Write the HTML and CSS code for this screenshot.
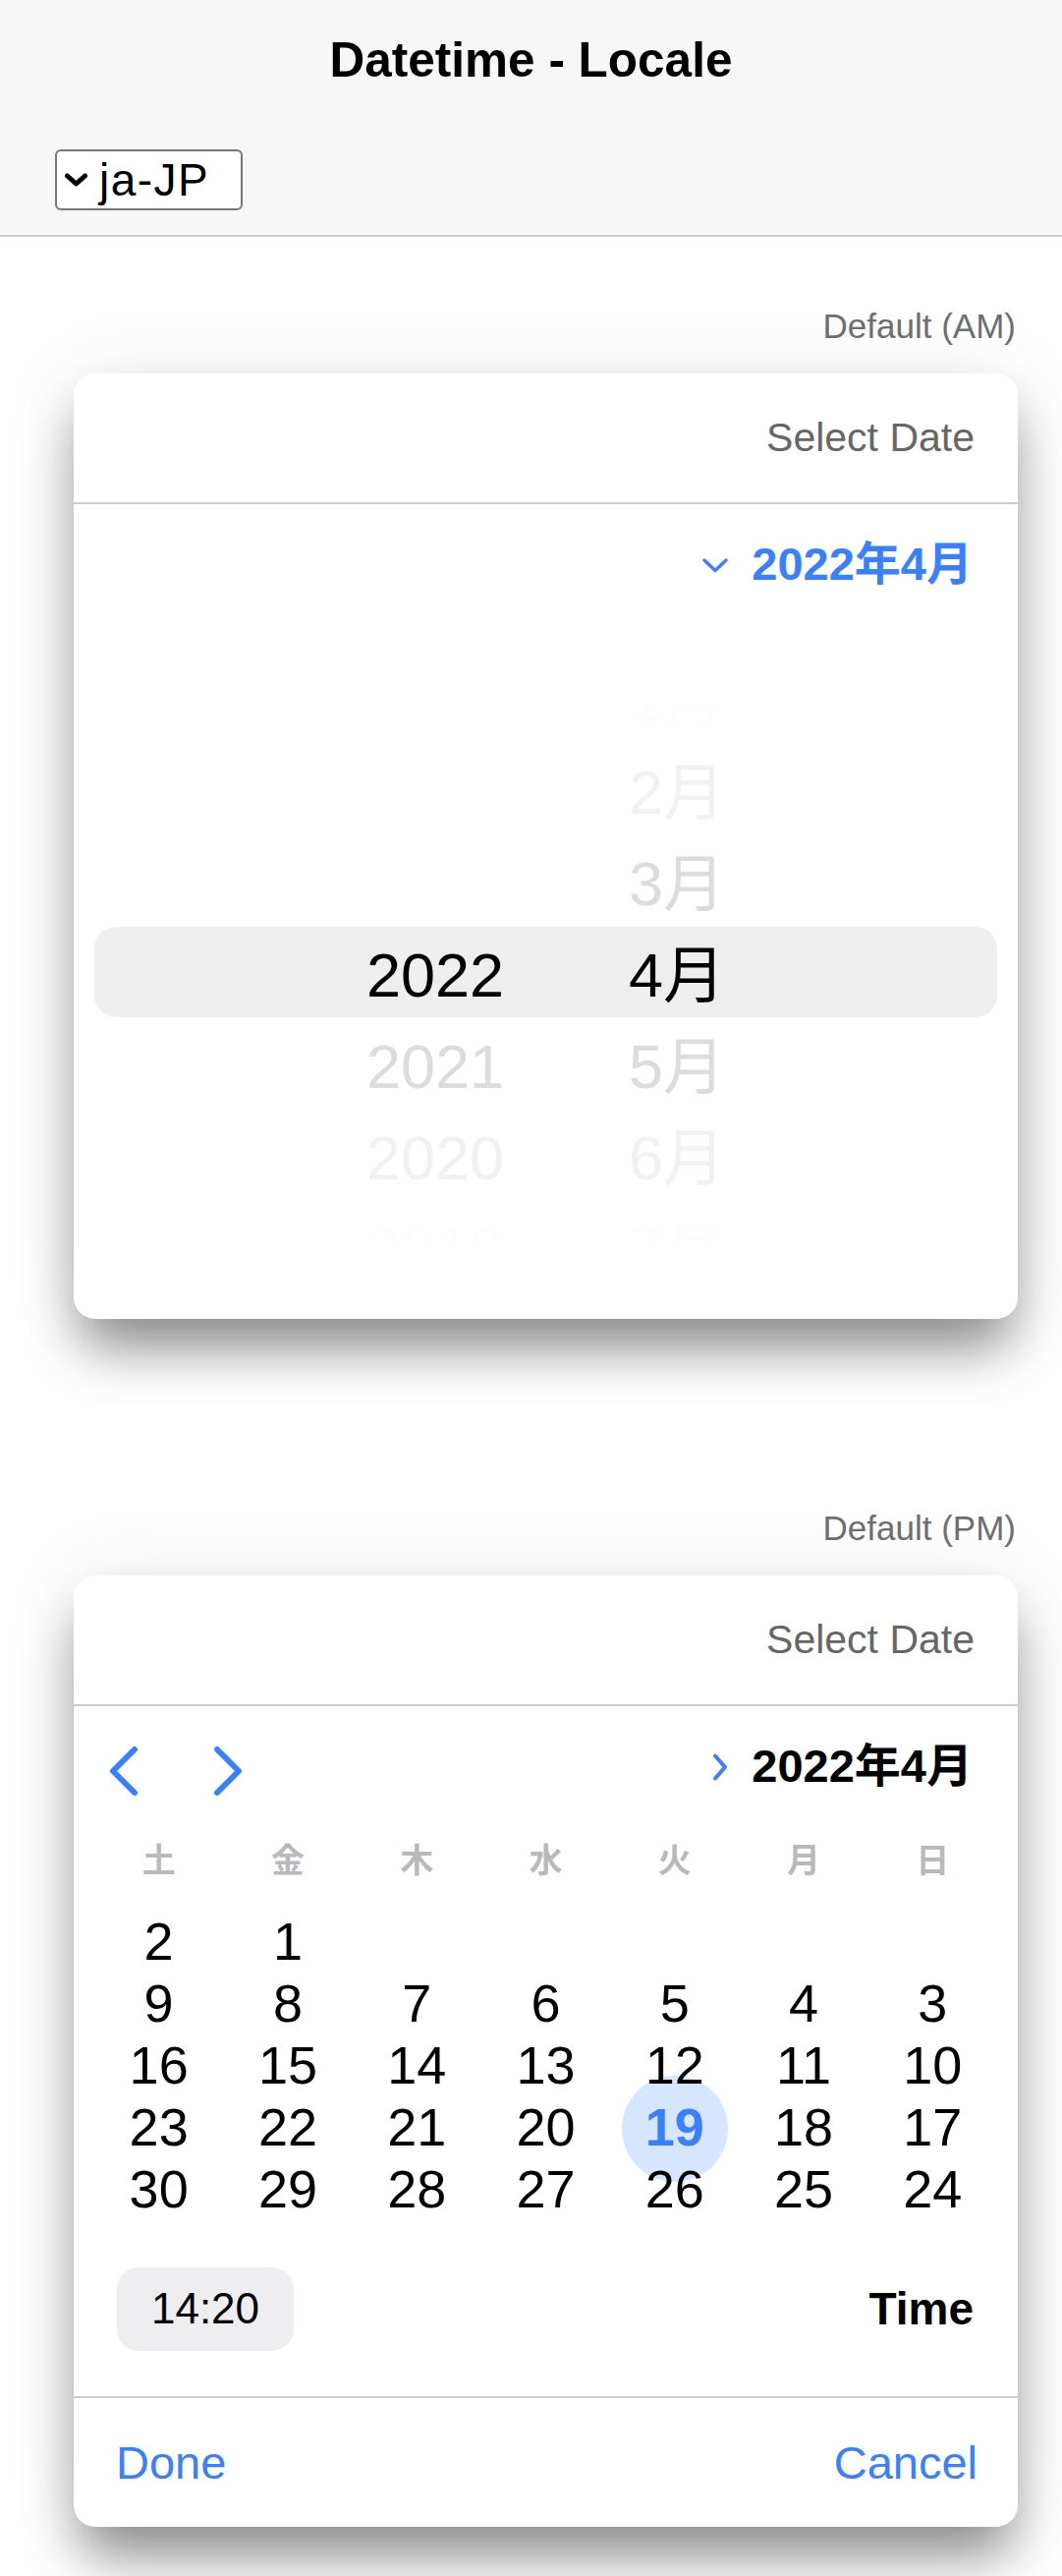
FILE: index.html
```html
<!DOCTYPE html>
<html lang="ja">
<head>
<meta charset="utf-8">
<title>Datetime - Locale</title>
<link rel="stylesheet" href="styles.css">
</head>
<body>
<header class="toolbar">
  <h1 class="title">Datetime - Locale</h1>
  <div class="select-row">
    <div class="select">
      <svg class="select-chev" width="25" height="14" viewBox="0 0 25 14"><path d="M3.5 3 L12.5 11 L21.5 3"/></svg>
      <span class="select-text">ja-JP</span>
    </div>
  </div>
</header>

<main class="content">
  <section class="demo">
    <div class="demo-label">Default (AM)</div>
    <div class="card">
      <div class="card-head">Select Date</div>
      <div class="month-row picker-row">
        <div class="month-toggle">
          <svg class="chev-down" width="28" height="17" viewBox="0 0 28 17"><path d="M3 3 L14 13.5 L25 3"/></svg>
          <span class="month-text blue">2022年4月</span>
        </div>
      </div>
      <div class="wheel">
        <div class="wheel-highlight"></div>
        <div class="wheel-cols">
          <div class="wheel-col">
            <div class="wheel-item d3"></div>
            <div class="wheel-item d2"></div>
            <div class="wheel-item d1"></div>
            <div class="wheel-item d0">2022</div>
            <div class="wheel-item d1">2021</div>
            <div class="wheel-item d2">2020</div>
            <div class="wheel-item d3">2019</div>
          </div>
          <div class="wheel-col">
            <div class="wheel-item d3">1月</div>
            <div class="wheel-item d2">2月</div>
            <div class="wheel-item d1">3月</div>
            <div class="wheel-item d0">4月</div>
            <div class="wheel-item d1">5月</div>
            <div class="wheel-item d2">6月</div>
            <div class="wheel-item d3">7月</div>
          </div>
        </div>
      </div>
    </div>
  </section>

  <section class="demo demo-second">
    <div class="demo-label">Default (PM)</div>
    <div class="card">
      <div class="card-head">Select Date</div>
      <div class="month-row nav-row">
        <div class="nav-buttons">
          <svg class="nav-chev" width="32" height="52" viewBox="0 0 32 52"><path d="M27 4 L5 26 L27 48"/></svg>
          <svg class="nav-chev" width="32" height="52" viewBox="0 0 32 52"><path d="M5 4 L27 26 L5 48"/></svg>
        </div>
        <div class="month-toggle">
          <svg class="chev-right" width="18" height="30" viewBox="0 0 18 30"><path d="M4 3.5 L14 15 L4 26.5"/></svg>
          <span class="month-text">2022年4月</span>
        </div>
      </div>
      <div class="weekdays">
        <span>土</span><span>金</span><span>木</span><span>水</span><span>火</span><span>月</span><span>日</span>
      </div>
      <div class="days">
        <span class="day">2</span><span class="day">1</span><span class="day"></span><span class="day"></span><span class="day"></span><span class="day"></span><span class="day"></span>
        <span class="day">9</span><span class="day">8</span><span class="day">7</span><span class="day">6</span><span class="day">5</span><span class="day">4</span><span class="day">3</span>
        <span class="day">16</span><span class="day">15</span><span class="day">14</span><span class="day">13</span><span class="day">12</span><span class="day">11</span><span class="day">10</span>
        <span class="day">23</span><span class="day">22</span><span class="day">21</span><span class="day">20</span><span class="day selected">19</span><span class="day">18</span><span class="day">17</span>
        <span class="day">30</span><span class="day">29</span><span class="day">28</span><span class="day">27</span><span class="day">26</span><span class="day">25</span><span class="day">24</span>
      </div>
      <div class="time-row">
        <div class="time-btn">14:20</div>
        <div class="time-label">Time</div>
      </div>
      <div class="card-foot">
        <span class="foot-btn">Done</span>
        <span class="foot-btn">Cancel</span>
      </div>
    </div>
  </section>
</main>
</body>
</html>
```

FILE: styles.css
```css
html, body {
  margin: 0;
  padding: 0;
  background: #ffffff;
}

body {
  font-family: "Liberation Sans", "Noto Sans CJK JP", sans-serif;
  color: #000;
}

/* ---------- toolbar ---------- */
.toolbar {
  background: #f7f7f7;
  height: 239px;
  border-bottom: 2px solid #cbcbcb;
}

.title {
  margin: 0;
  height: 120px;
  display: flex;
  align-items: center;
  justify-content: center;
  font-size: 49.5px;
  font-weight: 700;
}

.select-row {
  padding: 32px 0 0 56px;
}

.select {
  display: inline-flex;
  align-items: center;
  box-sizing: border-box;
  width: 191px;
  height: 62px;
  padding-left: 7px;
  gap: 11px;
  border: 2px solid #767676;
  border-radius: 6px;
  background: #fff;
  font-size: 46px;
  letter-spacing: 1.5px;
  line-height: 1;
}

.select-chev path {
  fill: none;
  stroke: #000;
  stroke-width: 5;
  stroke-linecap: round;
  stroke-linejoin: round;
}

/* ---------- content ---------- */
.content {
  padding: 71px 45px 60px 75px;
}

.demo-second {
  margin-top: 193px;
}

.demo-label {
  height: 40px;
  line-height: 40px;
  text-align: right;
  font-size: 35px;
  color: #6e6e71;
  padding-right: 2px;
}

.card {
  margin-top: 28px;
  background: #fff;
  border-radius: 22px;
  box-shadow: 0 36px 56px -8px rgba(0, 0, 0, 0.45), 0 0 80px rgba(0, 0, 0, 0.08);
  overflow: hidden;
}

.card-head {
  height: 131px;
  display: flex;
  align-items: center;
  justify-content: flex-end;
  padding-right: 44px;
  font-size: 41px;
  color: #666666;
  border-bottom: 2px solid #cdcdcd;
}

.month-row {
  height: 124px;
  display: flex;
  align-items: center;
  justify-content: flex-end;
  padding: 0 46px 0 35px;
}

.nav-row {
  justify-content: space-between;
}

.nav-buttons {
  display: flex;
  align-items: center;
  gap: 74px;
  margin-top: 8px;
}

.nav-chev path,
.chev-right path,
.chev-down path {
  fill: none;
  stroke: #3880ff;
  stroke-linecap: round;
  stroke-linejoin: round;
}

.nav-chev path { stroke-width: 6; }
.chev-right path { stroke-width: 4; }
.chev-down path { stroke-width: 3.5; }

.month-toggle {
  display: flex;
  align-items: center;
  gap: 23px;
}

.month-text {
  font-size: 47px;
  font-weight: 700;
  color: #000;
  margin-bottom: 12px;
}

.month-text.blue {
  color: #3880ff;
}

/* ---------- wheel picker ---------- */
.wheel {
  position: relative;
  margin-top: 77px;
  margin-bottom: 77px;
  height: 551px;
  overflow: hidden;
}

.wheel-highlight {
  position: absolute;
  left: 21px;
  right: 21px;
  top: 229px;
  height: 92px;
  border-radius: 22px;
  background: #eeeeee;
}

.wheel-cols {
  position: relative;
  display: grid;
  grid-template-columns: 267px auto;
  padding-left: 298px;
  margin-top: -47.5px;
}

.wheel-item {
  height: 93px;
  line-height: 93px;
  font-size: 63px;
  white-space: nowrap;
}

.wheel-item.d0 { color: #000; }
.wheel-item.d1 { color: #dcdcdc; }
.wheel-item.d2 { color: #f1f1f1; }
.wheel-item.d3 { color: #fdfdfd; }

/* ---------- calendar ---------- */
.weekdays {
  display: grid;
  grid-template-columns: repeat(7, 1fr);
  padding: 0 21px;
  height: 60px;
  align-items: center;
  text-align: center;
  font-size: 34px;
  font-weight: 700;
  color: #b9b9bb;
}

.days {
  isolation: isolate;
  display: grid;
  grid-template-columns: repeat(7, 1fr);
  grid-auto-rows: 63px;
  padding: 23.5px 21px 0;
}

.day {
  position: relative;
  display: flex;
  align-items: center;
  justify-content: center;
  font-size: 54px;
  line-height: 63px;
}

.day.selected {
  color: #3880ff;
  font-weight: 700;
}

.day.selected::before {
  content: "";
  position: absolute;
  z-index: -1;
  left: 50%;
  top: 50%;
  width: 108px;
  height: 108px;
  margin: -52px 0 0 -54px;
  border-radius: 50%;
  background: #d7e6ff;
}

.time-row {
  display: flex;
  align-items: center;
  justify-content: space-between;
  padding: 48px 45px 46px 44px;
  border-bottom: 2px solid #cdcdcd;
}

.time-btn {
  width: 180px;
  height: 85px;
  border-radius: 22px;
  background: #eeeef0;
  display: flex;
  align-items: center;
  justify-content: center;
  font-size: 44px;
}

.time-label {
  font-size: 46px;
  font-weight: 700;
}

.card-foot {
  height: 131px;
  display: flex;
  align-items: center;
  justify-content: space-between;
  padding: 0 41px 0 43px;
}

.foot-btn {
  font-size: 47px;
  color: #3880ff;
}
```
